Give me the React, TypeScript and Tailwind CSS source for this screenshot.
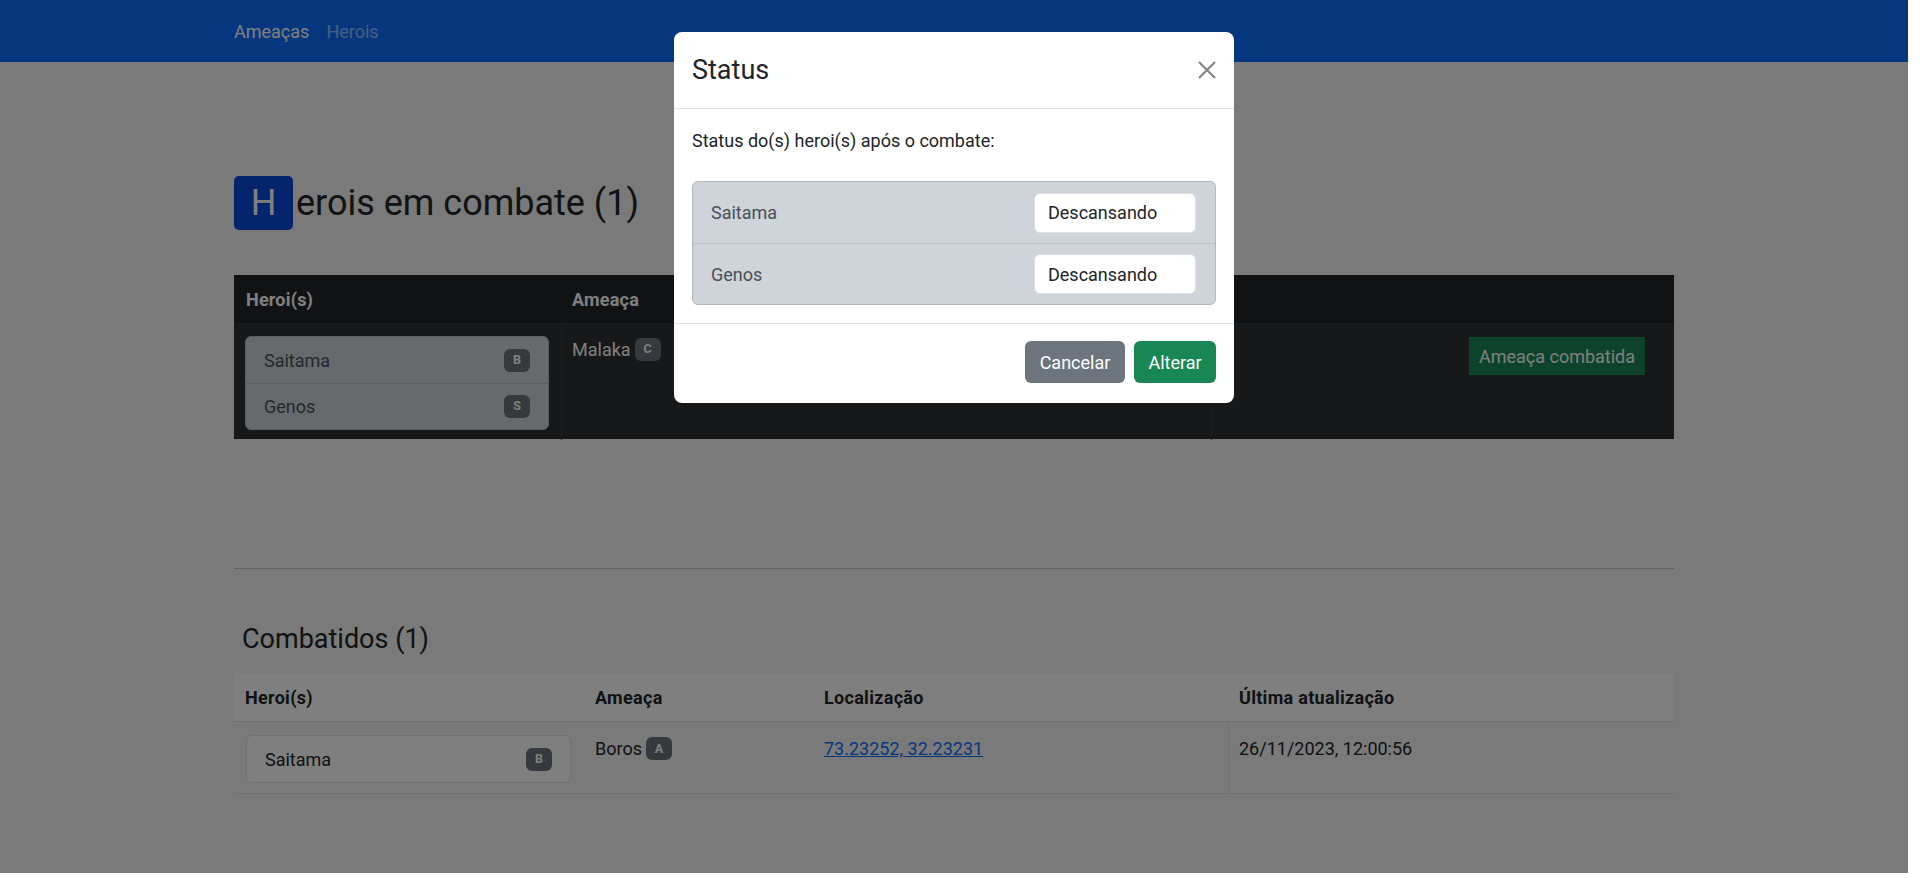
type Hero = { name: string; rank: string };

function Badge({ label }: { label: string }) {
  return (
    <span className="inline-flex h-[23px] min-w-[26px] items-center justify-center rounded-[6px] bg-[#6c757d] px-[7px] text-[12.5px] font-bold leading-none text-white">
      {label}
    </span>
  );
}

function HeroList({ heroes, dark }: { heroes: Hero[]; dark?: boolean }) {
  return (
    <div
      className={`overflow-hidden rounded-[6px] border ${
        dark
          ? "border-[#b4b9be] bg-[#ced4da] text-[#495057]"
          : "border-[#dee2e6] bg-white text-[#212529]"
      }`}
    >
      {heroes.map((hero, i) => (
        <div
          key={hero.name}
          className={`flex h-[46px] items-center justify-between pl-[18px] pr-[18px] ${
            i > 0 ? (dark ? "border-t border-[#b4b9be]" : "border-t border-[#dee2e6]") : ""
          }`}
        >
          <span>{hero.name}</span>
          <Badge label={hero.rank} />
        </div>
      ))}
    </div>
  );
}

export default function App() {
  const inCombat: Hero[] = [
    { name: "Saitama", rank: "B" },
    { name: "Genos", rank: "S" }
  ];

  return (
    <div className="relative h-[873px] w-[1908px] overflow-hidden bg-[#f4f4f4] font-['Roboto',sans-serif] text-[18px] leading-[1.5] text-[#212529]">
      <nav className="h-[62px] bg-[#0d6efd]">
        <div className="mx-auto flex h-full w-[1440px] items-center gap-[17px]">
          <span className="text-white">Ameaças</span>
          <span className="text-white/55">Herois</span>
        </div>
      </nav>

      <main className="mx-auto w-[1440px]">
        <h1 className="mt-[114px] flex h-[54px] items-center text-[36px] leading-[54px]">
          <span className="flex h-[54px] w-[59px] items-center justify-center rounded-[5px] bg-[#0848dc] text-white">
            H
          </span>
          <span className="ml-[3px]">erois em combate (1)</span>
        </h1>

        <section className="mt-[45px] text-white">
          <div className="grid h-[48px] grid-cols-[328px_338px_312px_462px] items-center bg-[#212529] font-bold">
            <div className="pl-[12px] tracking-[0.2px]">Heroi(s)</div>
            <div className="pl-[10px] tracking-[0.2px]">Ameaça</div>
            <div />
            <div />
          </div>
          <div className="grid h-[116px] grid-cols-[328px_338px_312px_462px] border-t border-[#32383e] bg-[#2c3034]">
            <div className="border-r border-[#373b3e] pb-[10px] pl-[11px] pr-[12px] pt-[12px]">
              <HeroList heroes={inCombat} dark />
            </div>
            <div className="pl-[10px] pt-[12px]">
              <span className="inline-flex items-center gap-[4px]">
                Malaka <Badge label="C" />
              </span>
            </div>
            <div className="border-r border-[#373b3e]" />
            <div className="flex items-start justify-end pr-[29px] pt-[13px]">
              <button
                type="button"
                className="flex h-[38px] w-[176px] items-center justify-center bg-[#198754] text-white"
              >
                Ameaça combatida
              </button>
            </div>
          </div>
        </section>

        <hr className="mt-[129px] border-0 border-t border-[#c4c6c8]" />

        <h3 className="mt-[54px] pl-[8px] text-[27px] leading-[1.2]">Combatidos (1)</h3>

        <section className="mt-[18px]">
          <div className="grid h-[49px] grid-cols-[349px_229px_416px_446px] items-center border-b border-[#dee2e6] bg-white font-bold tracking-[0.3px]">
            <div className="pl-[11px]">Heroi(s)</div>
            <div className="pl-[12px]">Ameaça</div>
            <div className="pl-[12px]">Localização</div>
            <div className="pl-[11px]">Última atualização</div>
          </div>
          <div className="grid h-[72px] grid-cols-[349px_229px_416px_446px] border-b border-[#dee2e6]">
            <div className="pl-[12px] pr-[12px] pt-[13px]">
              <HeroList heroes={[{ name: "Saitama", rank: "B" }]} />
            </div>
            <div className="pl-[12px] pt-[13px]">
              <span className="inline-flex items-center gap-[4px]">
                Boros <Badge label="A" />
              </span>
            </div>
            <div className="pl-[12px] pt-[13px]">
              <a href="#" className="text-[#0d6efd] underline">
                73.23252, 32.23231
              </a>
            </div>
            <div className="border-l border-[#dee2e6] pl-[10px] pt-[13px]">26/11/2023, 12:00:56</div>
          </div>
        </section>
      </main>

      <div className="absolute inset-0 flex justify-center bg-black/50 pt-[32px]">
        <div className="h-[371px] w-[560px] rounded-[8px] bg-white">
          <div className="flex h-[77px] items-center justify-between border-b border-[#dee2e6] px-[18px]">
            <h5 className="text-[27px] leading-[1.2]">Status</h5>
            <svg width="18" height="18" viewBox="0 0 18 18" className="text-[#808080]" aria-hidden>
              <path d="M1 1L17 17M17 1L1 17" stroke="currentColor" strokeWidth="2" />
            </svg>
          </div>
          <div className="px-[18px] pb-[18px] pt-[18px]">
            <p>Status do(s) heroi(s) após o combate:</p>
            <div className="mt-[27px] overflow-hidden rounded-[6px] border border-[#b1b7bd] bg-[#ced4da]">
              {["Saitama", "Genos"].map((name, i) => (
                <div
                  key={name}
                  className={`flex h-[61px] items-center justify-between pl-[18px] pr-[19px] ${
                    i > 0 ? "border-t border-[#b9bfc5]" : ""
                  }`}
                >
                  <span className="text-[#495057]">{name}</span>
                  <div className="flex h-[40px] w-[162px] items-center rounded-[6px] border border-[#dee2e6] bg-white pl-[13px] text-[#212529]">
                    Descansando
                  </div>
                </div>
              ))}
            </div>
          </div>
          <div className="flex h-[79px] items-center justify-end gap-[9px] border-t border-[#dee2e6] px-[18px] pb-[2px]">
            <button
              type="button"
              className="flex h-[42px] w-[100px] items-center justify-center rounded-[6px] bg-[#6c757d] text-white"
            >
              Cancelar
            </button>
            <button
              type="button"
              className="flex h-[42px] w-[82px] items-center justify-center rounded-[6px] bg-[#198754] text-white"
            >
              Alterar
            </button>
          </div>
        </div>
      </div>
    </div>
  );
}
